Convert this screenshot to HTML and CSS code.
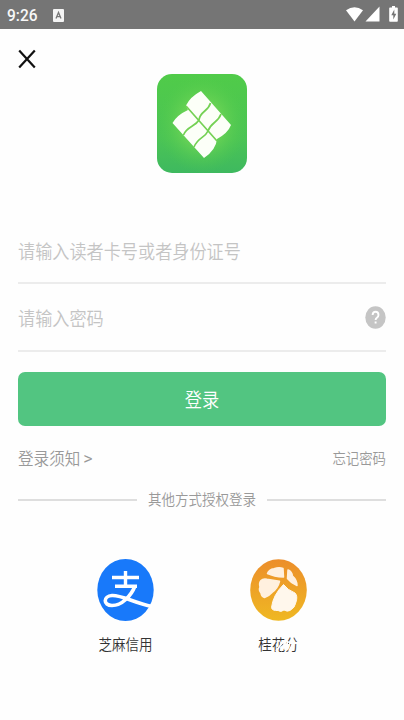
FILE: index.html
```html
<!DOCTYPE html>
<html lang="zh-CN">
<head>
<meta charset="utf-8">
<title>登录</title>
<link rel="stylesheet" href="styles.css">
</head>
<body>
<header class="status">
  <span class="time tall">9:26</span>
  <svg class="app" width="11" height="13" viewBox="0 0 11 13"><rect width="11" height="13" rx="1" fill="#f4f4f4"/><path d="M3 9.5 5.5 3.5 8 9.5M4 7.7h3" fill="none" stroke="#777" stroke-width="1.3"/></svg>
  <svg class="signals" width="52" height="20" viewBox="0 0 52 20" fill="#fff"><path d="M0 5.2Q8.500-.8 17 5.200L8.500 16.500Z"/><path d="M33.500 1.500V16.500H19.500Z"/><path d="M44 2.500h2V1h3v1.500h2q.8 0 .8.800v12.700q0 .8-.8.800h-7q-.8 0-.8-.8V3.300q0-.8.8-.8Z"/><path d="m48.300 4.500-3 5.700h2v4.300l3-5.800h-2Z" fill="#757575"/></svg>
</header>
<main class="page">
  <svg class="close" width="18" height="20" viewBox="0 0 18 20"><path d="m1.200 1.500 15.600 17M16.800 1.500l-15.600 17" stroke="#111" stroke-width="2.200" fill="none"/></svg>
  <svg class="logo" width="90" height="99" viewBox="0 0 90 99">
    <defs>
      <linearGradient id="base" x2="0" y2="1"><stop stop-color="#50cb49"/><stop offset=".65" stop-color="#4bc455"/><stop offset="1" stop-color="#3eb95f"/></linearGradient>
      <radialGradient id="glow"><stop stop-color="#8ce05a"/><stop offset=".5" stop-color="#72d755" stop-opacity=".6"/><stop offset="1" stop-color="#50cb49" stop-opacity="0"/></radialGradient>
    </defs>
    <rect width="90" height="99" rx="15" fill="url(#base)"/>
    <rect width="90" height="99" rx="15" fill="url(#glow)"/>
    <path d="M44 17 74 51 Q71 59 60 65 Q59 76 47 84 L15.500 49 Q20 41 31 36 L29 31.500 Q33 23 44 17Z" fill="#fcfff8"/>
    <path d="M29 32 60 67M26.500 61C30 52 38 53 42 46 43 37 51 38 53.500 29M37 73C41 63 48 64 51 57 54 48 61 49 64 40" fill="none" stroke="#74d154" stroke-width="1.700"/>
  </svg>
  <div class="field account"><span class="tall">请输入读者卡号或者身份证号</span></div>
  <div class="field password"><span class="tall">请输入密码</span>
    <svg width="21" height="23" viewBox="0 0 21 23"><ellipse cx="10.500" cy="11.500" rx="10.200" ry="11.300" fill="#c5c5c5"/><path d="M7.600 9q.2-3.200 3-3.200T13.500 9q0 1.600-1.600 2.700Q10.600 12.600 10.600 14M10.600 15.600v2" fill="none" stroke="#fff" stroke-width="1.900"/></svg>
  </div>
  <div class="button"><span class="tall">登录</span></div>
  <div class="links"><span class="notice tall">登录须知 <b>&gt;</b></span><span class="forgot tall">忘记密码</span></div>
  <div class="divider"><span class="tall">其他方式授权登录</span></div>
  <div class="providers">
    <div class="provider">
      <svg width="57" height="62" viewBox="0 0 57 62"><ellipse cx="28.500" cy="31" rx="28.200" ry="31" fill="#1879fa"/><path d="M15 18.500H42M28.500 12V27M18 27.300H40" fill="none" stroke="#fff" stroke-width="3.400"/><path d="M38 27C34 37 25 46.500 15 46.500 6 46.500 6 37 15 36.500 25 36 37 44 55 47.500" fill="none" stroke="#fff" stroke-width="3.600"/></svg>
      <span class="tall">芝麻信用</span>
    </div>
    <div class="provider">
      <svg width="57" height="62" viewBox="0 0 57 62"><defs><linearGradient id="gold" x2="0" y2="1"><stop stop-color="#ec8e2b"/><stop offset="1" stop-color="#efb823"/></linearGradient></defs><ellipse cx="28.500" cy="31" rx="28.300" ry="30.800" fill="url(#gold)"/><g fill="#fff0df" stroke="#fff0df" stroke-width="1.500" stroke-linejoin="round"><path d="M17.500 14.500Q19 10.500 24 9.800 29 8 33 9.500L33.500 18Q24 17.500 17.500 14.500Z"/><path d="M38 11Q41.500 12 42.500 17 47 21 47 26.500 41 24 37.500 19.500Z"/><path d="M11 21.500Q13 19.500 17 20.300L29.500 22.300Q28 29 22 33.500 19 37 14.500 38.500 11.500 38 11 34 8.500 31 10 28 8.800 24 11 21.500Z"/></g><path d="M33.500 25.500Q37.500 31 45 34 48 37 46 43 45 49 40 51.500 37 53 34 51 31 53.500 28 51.500 22 52 21.500 48.500 23 36 33.500 25.500Z" fill="#fff7ec" stroke="#fff7ec" stroke-linejoin="round"/></svg>
      <span class="label"><span class="tall">桂花分</span><svg class="mark" width="30" height="20" viewBox="0 0 30 20"><path d="M3 18 10 9M8 18 12 10M14 3 11 11M15 8 12 17M16 10h11M21 9 16 18M23 3 27 9" stroke="#fefefe" stroke-width="1.900" fill="none"/></svg></span>
    </div>
  </div>
</main>
</body>
</html>
```
FILE: styles.css
```css
* { box-sizing: border-box; }
body { margin: 0; background: #fefefe; font-family: "Noto Sans CJK SC", sans-serif; font-weight: 350; overflow: hidden; }
svg { display: block; flex: none; }
.tall { display: inline-block; white-space: nowrap; transform: scaleY(1.1); }
.status { height: 29px; background: #757575; display: flex; align-items: center; padding: 0 6px 0 7px; color: #f8f8f8; }
.time { width: 46px; font: 500 15.500px/20px Roboto, sans-serif; padding-top: 1px; }
.app { margin-top: 2px; }
.signals { margin-left: auto; }
.page { height: 691px; display: flex; flex-direction: column; padding: 20px 18px 0; }
.logo { align-self: center; margin: 5px 0 0; }
.field { display: flex; align-items: center; justify-content: space-between; color: #c4c4c4; font-size: 17.150px; border-bottom: 2px solid #ececec; }
.account { height: 65px; margin-top: 46px; }
.password { height: 68px; }
.button { height: 54px; margin-top: 20px; padding-bottom: 2px; border-radius: 7px; background: #52c581; color: #fff; font-size: 17.200px; display: flex; align-items: center; justify-content: center; }
.links { height: 30px; margin-top: 17px; padding-bottom: 2px; display: flex; align-items: center; justify-content: space-between; color: #999; }
.notice { font-size: 15.600px; }
.notice b { font-weight: 400; }
.forgot { font-size: 13.400px; }
.divider { height: 24px; margin-top: 15px; display: flex; align-items: center; gap: 11px; color: #999; font-size: 13.500px; }
.divider .tall { padding-bottom: 2px; }
.divider::before, .divider::after { content: ""; flex: 1; height: 2px; background: #dedede; }
.providers { display: flex; gap: 96px; margin: 47px 0 0 79px; }
.provider { width: 57px; display: flex; flex-direction: column; align-items: center; color: #333; font-size: 13.500px; line-height: 20px; }
.provider > span { margin-top: 12px; }
.label { position: relative; }
.mark { position: absolute; left: 15px; top: 0; }
```
